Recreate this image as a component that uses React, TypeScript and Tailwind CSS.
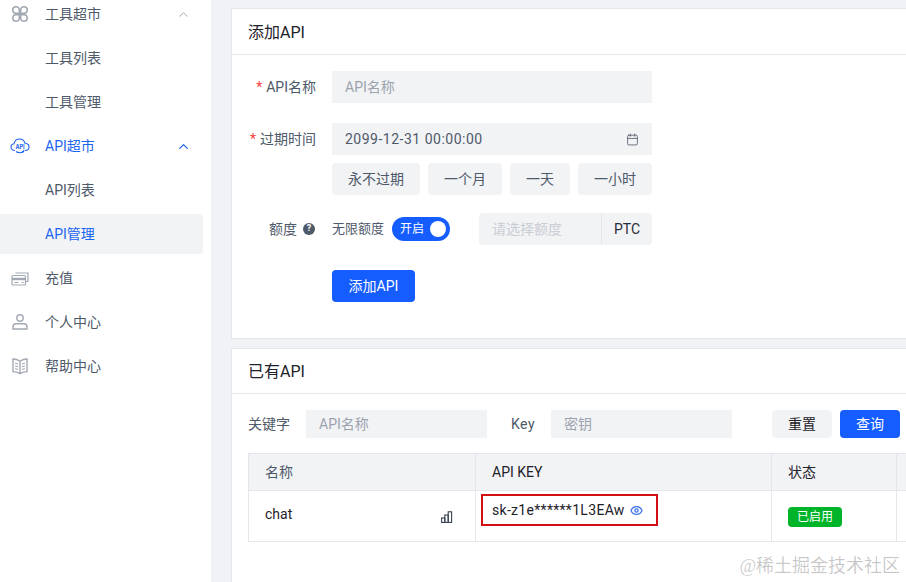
import { ChevronUp, Calendar, Eye } from "lucide-react";
import type { ReactNode } from "react";

const font = "font-['Roboto','Noto_Sans_CJK_SC',sans-serif]";

const ToolIcon = () => (
  <svg width="18" height="18" viewBox="0 0 18 18" fill="none" stroke="#a3a9b3" strokeWidth="1.500">
    <path d="M8.300 8.300H4.800A3.300 3.300 0 1 1 8.300 4.800V8.300Z" />
    <path d="M9.700 8.300H13.200A3.300 3.300 0 1 0 9.700 4.800V8.300Z" />
    <path d="M8.300 9.700H4.800A3.300 3.300 0 1 0 8.300 13.200V9.700Z" />
    <path d="M9.700 9.700H13.200A3.300 3.300 0 1 1 9.700 13.200V9.700Z" />
  </svg>
);

const CloudIcon = () => (
  <svg width="20" height="18" viewBox="0 0 20 18" fill="none" stroke="#1c64f2" strokeWidth="1.100">
    <path d="M5 13.500C2.500 13.500 1 12 1 10c0-1.800 1.300-3 3-3.200C4.600 4 6.700 2 9.600 2c2.700 0 4.800 1.700 5.400 4.300 2.300.2 4 1.700 4 3.700 0 2-1.500 3.500-4 3.500" />
    <path d="M6 14.500c1.800 1.700 5.800 1.700 7.800 0M13.800 14.500v-1.800M13.800 14.500h-1.800" />
    <text x="10" y="11.500" textAnchor="middle" fontSize="5.500" fontWeight="700" fill="#1c64f2" stroke="none" fontFamily="Inter">API</text>
  </svg>
);

const WalletIcon = () => (
  <svg width="18" height="18" viewBox="0 0 18 18" fill="none" stroke="#a3a9b3" strokeWidth="1.200">
    <path d="M4.500 4h12.500v8.500h-2" />
    <rect x="1" y="6.500" width="13.500" height="9.500" rx="1" />
    <path d="M1 10h13.500" strokeWidth="2.400" />
    <path d="M3.500 13.500h4M10.500 13.500h2" />
  </svg>
);

const UserIcon = () => (
  <svg width="18" height="18" viewBox="0 0 18 18" fill="none" stroke="#a3a9b3" strokeWidth="1.400">
    <circle cx="9" cy="5" r="3.200" />
    <path d="M5 10.800h8a3 3 0 0 1 3 3V16H2v-2.200a3 3 0 0 1 3-3Z" />
  </svg>
);

const BookIcon = () => (
  <svg width="18" height="18" viewBox="0 0 18 18" fill="none" stroke="#a3a9b3" strokeWidth="1.400">
    <path d="M9 4.200C7 2.800 4.500 2 2 2v12.600c2.500 0 5 .6 7 2 2-1.400 4.500-2 7-2V2c-2.500 0-5 .8-7 2.200ZM9 4.200v12.400" />
    <path d="M4 6.200c1 0 2 .3 3 .8M4 9c1 0 2 .3 3 .8M4 11.800c1 0 2 .3 3 .8M11 7c1-.5 2-.8 3-.8M11 9.800c1-.5 2-.8 3-.8M11 12.600c1-.5 2-.8 3-.8" strokeWidth="1.100" />
  </svg>
);

const BarsIcon = () => (
  <svg width="12" height="12" viewBox="0 0 12 12" fill="none" stroke="#374151" strokeWidth="1.100">
    <rect x="0.600" y="7" width="3.200" height="4.400" />
    <rect x="3.800" y="4" width="3.400" height="7.400" />
    <rect x="7.200" y="0.800" width="3.400" height="10.600" />
  </svg>
);

const SideItem = ({ icon, label, active, child, open, selected }: { icon?: ReactNode; label: string; active?: boolean; child?: boolean; open?: boolean; selected?: boolean }) => (
  <div className="h-[44px] flex items-center">
    <div className={`h-[40px] w-[203px] flex items-center pl-[10px] pr-[12px] rounded-r ${selected ? "bg-[#f2f3f5]" : ""}`}>
      <div className="w-[20px] h-[20px] flex items-center justify-center mr-[15px]">{child ? null : icon}</div>
      <span className={`text-[14px] flex-1 ${active ? "text-[#1c64f2]" : "text-[#4e5969]"}`}>{label}</span>
      {open && <ChevronUp size={15} strokeWidth={active ? 2 : 1.500} className={active ? "text-[#1c64f2]" : "text-[#9ca3af]"} />}
    </div>
  </div>
);

const Field = ({ placeholder, value, className, right }: { placeholder?: string; value?: string; className: string; right?: ReactNode }) => (
  <div className={`bg-[#f2f3f5] flex items-center justify-between text-[14px] ${className}`}>
    {value ? <span className="text-[#4e5969] tracking-[0.5px]">{value}</span> : <span className="text-[#9ca3af]">{placeholder}</span>}
    {right}
  </div>
);

const GrayButton = ({ label, className }: { label: string; className: string }) => (
  <div className={`h-[32px] bg-[#f2f3f5] rounded-sm flex items-center justify-center text-[14px] text-[#4e5969] ${className}`}>{label}</div>
);

const Label = ({ children, className }: { children: ReactNode; className?: string }) => (
  <div className={`w-[84px] mr-[16px] text-right text-[14px] text-[#4e5969] ${className ?? ""}`}>{children}</div>
);

const Star = () => <span className="text-[#f53f3f] mr-[4px]">*</span>;

const App = () => {
  return (
    <div className={`w-[906px] h-[582px] overflow-hidden flex bg-[#f0f2f5] ${font} relative`}>
      <aside className="w-[211px] shrink-0 bg-white">
        <div className="-mt-2">
          <SideItem icon={<ToolIcon />} label="工具超市" open />
          <SideItem child label="工具列表" />
          <SideItem child label="工具管理" />
          <SideItem icon={<CloudIcon />} label="API超市" active open />
          <SideItem child label="API列表" />
          <SideItem child label="API管理" active selected />
          <SideItem icon={<WalletIcon />} label="充值" />
          <SideItem icon={<UserIcon />} label="个人中心" />
          <SideItem icon={<BookIcon />} label="帮助中心" />
        </div>
      </aside>

      <main className="flex-1 min-w-0 pl-[20px] pt-[8px]">
        <section className="w-[720px] h-[331px] bg-white border border-[#e5e6eb]">
          <div className="h-[46px] border-b border-[#e5e6eb] pl-[16px] pt-[2px] flex items-center text-[16px] text-[#1d2129]">添加API</div>
          <div className="pt-[16px]">
            <div className="flex items-center h-[32px]">
              <Label><Star />API名称</Label>
              <Field placeholder="API名称" className="w-[320px] h-[32px] pl-[13px]" />
            </div>
            <div className="flex items-center h-[32px] mt-[20px]">
              <Label><Star />过期时间</Label>
              <Field value="2099-12-31 00:00:00" className="w-[320px] h-[32px] pl-[13px] pr-[13px]" right={<Calendar size={13} strokeWidth={1.500} className="text-[#4e5969]" />} />
            </div>
            <div className="flex gap-[8px] mt-[8px] ml-[100px]">
              <GrayButton label="永不过期" className="w-[88px]" />
              <GrayButton label="一个月" className="w-[74px]" />
              <GrayButton label="一天" className="w-[60px]" />
              <GrayButton label="一小时" className="w-[74px]" />
            </div>
            <div className="flex items-center h-[32px] mt-[18px]">
              <Label className="flex items-center justify-end gap-[6px] pr-[1px]">
                额度
                <span className="w-[12px] h-[12px] rounded-full bg-[#4e5969] text-white text-[9px] font-bold flex items-center justify-center">?</span>
              </Label>
              <span className="text-[13px] text-[#4e5969] w-[52px] mr-[8px] whitespace-nowrap">无限额度</span>
              <div className="w-[58px] h-[24px] rounded-full bg-[#165dff] flex items-center justify-between pl-[8px] pr-[4px]">
                <span className="text-[12px] text-white">开启</span>
                <span className="w-[16px] h-[16px] rounded-full bg-white" />
              </div>
              <div className="ml-[29px] w-[173px] h-[32px] bg-[#f2f3f5] rounded-sm flex text-[14px]">
                <div className="w-[123px] border-r border-[#e5e6eb] pl-[13px] flex items-center text-[#c9cdd4]">请选择额度</div>
                <div className="flex-1 flex items-center justify-center text-[#272e3b]">PTC</div>
              </div>
            </div>
            <div className="mt-[25px] ml-[100px] w-[83px] h-[32px] bg-[#165dff] rounded-sm text-white text-[14px] flex items-center justify-center">添加API</div>
          </div>
        </section>

        <section className="w-[720px] h-[260px] mt-[9px] bg-white border border-[#e5e6eb] px-[16px]">
          <div className="h-[45px] -mx-[16px] border-b border-[#e5e6eb] pl-[16px] pt-[2px] flex items-center text-[16px] text-[#1d2129]">已有API</div>
          <div className="flex items-center h-[28px] mt-[16px] text-[14px]">
            <span className="w-[58px] text-[#4e5969]">关键字</span>
            <Field placeholder="API名称" className="w-[181px] h-[28px] pl-[13px]" />
            <span className="ml-[24px] w-[40px] text-[#4e5969] tracking-[0.5px]">Key</span>
            <Field placeholder="密钥" className="w-[181px] h-[28px] pl-[13px]" />
            <div className="ml-[40px] w-[60px] h-[28px] bg-[#f2f3f5] rounded-sm flex items-center justify-center text-[#1d2129]">重置</div>
            <div className="ml-[8px] w-[60px] h-[28px] bg-[#165dff] rounded-sm flex items-center justify-center text-white">查询</div>
          </div>
          <div className="mt-[15px] w-[660px] border-t border-b border-l border-[#e5e6eb] text-[14px]">
            <div className="flex h-[37px] bg-[#f2f3f5] border-b border-[#e5e6eb]">
              <div className="w-[227px] border-r border-[#e5e6eb] pl-[16px] flex items-center text-[#4e5969]">名称</div>
              <div className="w-[296px] border-r border-[#e5e6eb] pl-[16px] flex items-center text-[#1d2129]">API KEY</div>
              <div className="w-[125px] border-r border-[#e5e6eb] pl-[16px] flex items-center text-[#1d2129]">状态</div>
            </div>
            <div className="flex h-[50px]">
              <div className="w-[227px] border-r border-[#e5e6eb] pl-[16px] pr-[22px] flex items-center justify-between text-[#1d2129] pb-[4px]">
                chat
                <span className="mt-[6px]"><BarsIcon /></span>
              </div>
              <div className="w-[296px] border-r border-[#e5e6eb] pl-[5px] pt-[3px]">
                <div className="w-[177px] h-[32px] border-2 border-[#d40f14] flex items-center pl-[9px] gap-[5px] text-[#1d2129] whitespace-nowrap tracking-[0.3px]">
                  sk-z1e******1L3EAw
                  <Eye size={13} strokeWidth={2.400} className="text-[#3b74e8]" />
                </div>
              </div>
              <div className="w-[125px] border-r border-[#e5e6eb] pl-[16px] pt-[16px]">
                <div className="w-[54px] h-[20px] rounded-sm bg-[#00b42a] text-white text-[12px] flex items-center justify-center">已启用</div>
              </div>
            </div>
          </div>
        </section>
      </main>

      <div className="absolute right-[6px] bottom-[2px] text-[18px] text-[#00000038] font-['Liberation_Serif','Noto_Sans_CJK_SC',serif]">@稀土掘金技术社区</div>
    </div>
  );
};

export default App;
